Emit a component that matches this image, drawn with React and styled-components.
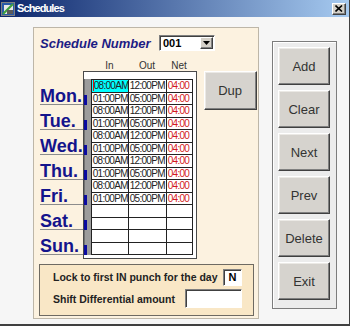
import React from "react";
import styled, { createGlobalStyle } from "styled-components";

const Global = createGlobalStyle`
  html, body { margin: 0; padding: 0; background: #f6f6f6; }
  body { font-family: "Liberation Sans", Arial, sans-serif; }
  * { box-sizing: border-box; }
`;

const Window = styled.div`
  width: 350px;
  height: 326px;
  background: #f6f6f6;
  border-right: 1px solid #404040;
  border-bottom: 2px solid #404040;
  display: flex;
  flex-direction: column;
`;

const TitleBar = styled.div`
  height: 17px;
  flex: none;
  background: linear-gradient(to right, #0a246a, #a6caf0);
  display: flex;
  align-items: center;
  padding: 0 3px 0 1px;
`;

const TitleText = styled.span`
  flex: 1;
  margin-left: 2px;
  color: #fff;
  font-weight: bold;
  font-size: 11px;
  letter-spacing: -0.9px;
  line-height: 17px;
`;

const CloseBtn = styled.div`
  width: 14px;
  height: 12px;
  background: #d4d0c8;
  border: 1px solid;
  border-color: #fff #404040 #404040 #fff;
  box-shadow: inset -1px -1px #808080;
  display: flex;
  align-items: center;
  justify-content: center;
`;

const Body = styled.div`
  flex: 1;
  display: flex;
  align-items: flex-start;
  padding: 10px 0 0 33px;
`;

const Panel = styled.div`
  width: 226px;
  height: 292px;
  background: #fcf2e0;
  border: 1px solid #bdb6a8;
  padding: 7px 4px 0 6px;
  display: flex;
  flex-direction: column;
`;

const HeaderRow = styled.div`
  display: flex;
  align-items: center;
  height: 16px;
`;

const PanelTitle = styled.span`
  width: 119px;
  font-size: 13px;
  font-weight: bold;
  font-style: italic;
  color: #1c1c84;
  white-space: nowrap;
`;

const Combo = styled.div`
  width: 56px;
  height: 16px;
  background: #fff;
  border: 1px solid;
  border-color: #808080 #fff #fff #808080;
  box-shadow: inset 1px 1px #404040;
  display: flex;
  align-items: center;
  padding: 1px 1px 1px 3px;
`;

const ComboText = styled.span`
  flex: 1;
  font-size: 11px;
  font-weight: bold;
  color: #000;
  line-height: 12px;
`;

const ComboBtn = styled.div`
  width: 13px;
  height: 12px;
  background: #d4d0c8;
  border: 1px solid;
  border-color: #fff #404040 #404040 #fff;
  box-shadow: inset -1px -1px #808080;
  display: flex;
  align-items: center;
  justify-content: center;
`;

const ColHeads = styled.div`
  margin-top: 10px;
  margin-left: 51px;
  height: 10px;
  display: grid;
  grid-template-columns: 37px 38px 26px;
`;

const ColHead = styled.span`
  text-align: center;
  font-size: 10px;
  line-height: 10px;
  color: #333;
`;

const MainRow = styled.div`
  display: flex;
  align-items: flex-start;
`;

const DayColumn = styled.div`
  width: 43px;
  margin-top: 9px;
  display: flex;
  flex-direction: column;
  position: relative;
  z-index: 1;
`;

const DayLabel = styled.div`
  height: 25px;
  border-bottom: 1px solid #8c8c8c;
  display: flex;
  align-items: flex-end;
  font-size: 18px;
  font-weight: bold;
  line-height: 16px;
  color: #14148c;
  position: relative;
  &::after {
    content: "";
    position: absolute;
    right: -4px;
    bottom: -1px;
    width: 3px;
    height: 10px;
    background: #0a0aa0;
  }
`;

const GridFrame = styled.div`
  border: 1px solid #4a4a4a;
  background: #fff;
  display: flex;
  padding: 7px 3px 3px 0;
`;

const Strip = styled.div`
  width: 7px;
  align-self: stretch;
  background: #9c9c9c;
  border-left: 1px solid #707070;
`;

const DataGrid = styled.div`
  display: grid;
  grid-template-columns: 37px 38px 26px;
  grid-auto-rows: 12.5px;
  border-top: 1px solid #222;
  border-left: 1px solid #222;
`;

const Cell = styled.div`
  border-right: 1px solid #222;
  border-bottom: 1px solid #222;
  font-size: 10px;
  line-height: 11px;
  letter-spacing: -0.7px;
  padding-left: 1px;
  white-space: nowrap;
  overflow: hidden;
  color: ${(p) => (p.$net ? "#d41c1c" : "#222")};
  background: ${(p) => (p.$active ? "#00ffff" : "#fff")};
`;

const Caret = styled.span`
  border-left: 1px solid #e01010;
`;

const Button = styled.div`
  width: ${(p) => p.$w || 52}px;
  height: ${(p) => p.$h || 38}px;
  flex: none;
  background: #d6d3ce;
  border: 1px solid;
  border-color: #fff #404040 #404040 #fff;
  box-shadow: inset -1px -1px #808080, inset 1px 1px #ebe9e5;
  display: flex;
  align-items: center;
  justify-content: center;
  font-size: 13px;
  color: #333;
`;

const DupButton = styled(Button)`
  margin-left: 7px;
`;

const OptionsBox = styled.div`
  margin-top: 5px;
  margin-left: -1px;
  width: 215px;
  height: 52px;
  background: #f9e7c6;
  border: 1px solid #6e6a62;
  padding: 3px 11px 0 13px;
  display: flex;
  flex-direction: column;
  gap: 3px;
`;

const OptionRow = styled.div`
  display: flex;
  align-items: center;
  justify-content: space-between;
  height: ${(p) => p.$h}px;
`;

const OptionLabel = styled.span`
  font-size: 10.5px;
  font-weight: bold;
  color: #222;
  white-space: nowrap;
`;

const TextBox = styled.div`
  width: ${(p) => p.$w}px;
  height: ${(p) => p.$h}px;
  background: #fff;
  border: 1px solid;
  border-color: #808080 #fff #fff #808080;
  box-shadow: inset 1px 1px #404040;
  display: flex;
  align-items: center;
  justify-content: center;
  font-size: 11px;
  font-weight: bold;
  color: #000;
`;

const ButtonFrame = styled.div`
  margin-left: 13px;
  margin-top: 14px;
  width: 65px;
  height: 268px;
  background: #ececec;
  border: 1px solid #7c7c7c;
  box-shadow: inset 1px 1px #fff;
  padding: 5px 0 0 5px;
  display: flex;
  flex-direction: column;
  gap: 5px;
`;

const days = ["Mon.", "Tue.", "Wed.", "Thu.", "Fri.", "Sat.", "Sun."];

const rows = [];
for (let i = 0; i < 5; i++) {
  rows.push(["08:00AM", "12:00PM", "04:00"]);
  rows.push(["01:00PM", "05:00PM", "04:00"]);
}
for (let i = 0; i < 4; i++) rows.push(["", "", ""]);

const TitleIcon = () => (
  <svg width="14" height="14" viewBox="0 0 14 14">
    <rect x="0.5" y="0.5" width="13" height="13" fill="#c8c8c8" stroke="#808080" />
    <rect x="1" y="1" width="12" height="12" fill="#2a5aa8" />
    <rect x="3" y="3" width="9" height="9" fill="#e8e8e8" />
    <path d="M2 12 L12 2" stroke="#3ca03c" strokeWidth="2.2" />
    <rect x="6" y="8" width="6" height="4" fill="#5a5a5a" />
  </svg>
);

export default function App() {
  return (
    <>
      <Global />
      <Window>
        <TitleBar>
          <TitleIcon />
          <TitleText>Schedules</TitleText>
          <CloseBtn>
            <svg width="8" height="7" viewBox="0 0 8 7">
              <path d="M0.5 0.5 L7 6.5 M7 0.5 L0.5 6.5" stroke="#000" strokeWidth="1.6" />
            </svg>
          </CloseBtn>
        </TitleBar>
        <Body>
          <Panel>
            <HeaderRow>
              <PanelTitle>Schedule Number</PanelTitle>
              <Combo>
                <ComboText>001</ComboText>
                <ComboBtn>
                  <svg width="7" height="4" viewBox="0 0 7 4">
                    <path d="M0 0 H7 L3.5 4 Z" fill="#000" />
                  </svg>
                </ComboBtn>
              </Combo>
            </HeaderRow>
            <ColHeads>
              <ColHead>In</ColHead>
              <ColHead>Out</ColHead>
              <ColHead>Net</ColHead>
            </ColHeads>
            <MainRow>
              <DayColumn>
                {days.map((d) => (
                  <DayLabel key={d}>{d}</DayLabel>
                ))}
              </DayColumn>
              <GridFrame>
                <Strip />
                <DataGrid>
                  {rows.map((r, i) => (
                    <React.Fragment key={i}>
                      <Cell $active={i === 0}>
                        {i === 0 && <Caret />}
                        {r[0]}
                      </Cell>
                      <Cell>{r[1]}</Cell>
                      <Cell $net>{r[2]}</Cell>
                    </React.Fragment>
                  ))}
                </DataGrid>
              </GridFrame>
              <DupButton $w={53} $h={39}>Dup</DupButton>
            </MainRow>
            <OptionsBox>
              <OptionRow $h={18}>
                <OptionLabel>Lock to first IN punch for the day</OptionLabel>
                <TextBox $w={19} $h={17}>N</TextBox>
              </OptionRow>
              <OptionRow $h={19}>
                <OptionLabel>Shift Differential amount</OptionLabel>
                <TextBox $w={57} $h={19} />
              </OptionRow>
            </OptionsBox>
          </Panel>
          <ButtonFrame>
            <Button>Add</Button>
            <Button>Clear</Button>
            <Button>Next</Button>
            <Button>Prev</Button>
            <Button>Delete</Button>
            <Button>Exit</Button>
          </ButtonFrame>
        </Body>
      </Window>
    </>
  );
}
